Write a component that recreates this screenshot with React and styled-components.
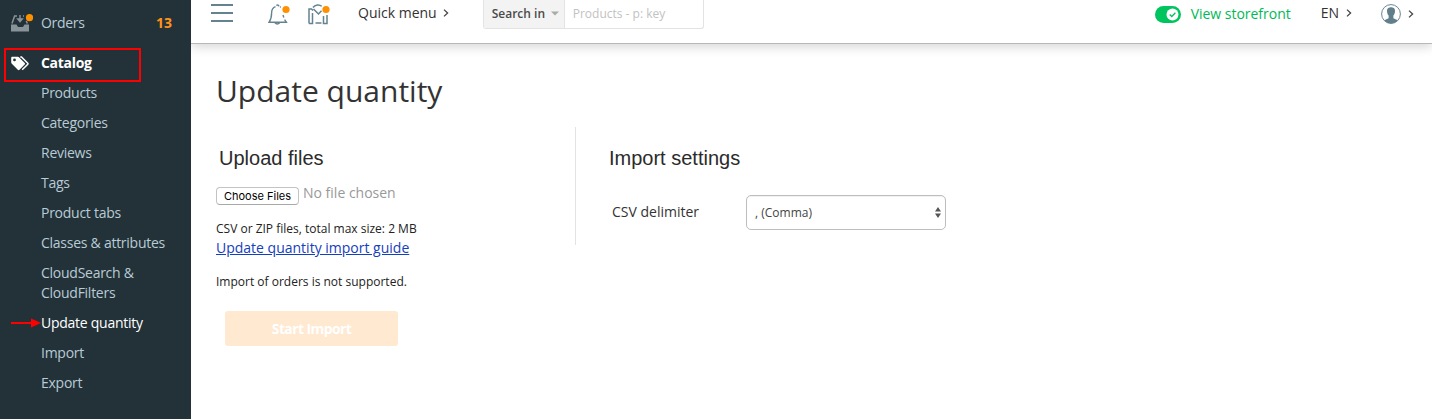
import React from "react";
import styled, { createGlobalStyle } from "styled-components";

const GlobalStyle = createGlobalStyle`
  *, *::before, *::after { box-sizing: border-box; }
  html, body { margin: 0; padding: 0; background: #fff; overflow: hidden; }
  body { font-family: "Open Sans", "Noto Sans", sans-serif; font-size: 14px; line-height: 20px; color: #333; }
  h1, h2, p, ul { margin: 0; padding: 0; }
  svg { display: block; }
`;

const Page = styled.div`
  display: flex;
  width: 1432px;
  height: 419px;
`;

const Sidebar = styled.nav`
  position: relative;
  flex: 0 0 191px;
  background: #233238;
  padding-top: 3px;
`;

const SectionRow = styled.a`
  display: flex;
  align-items: center;
  height: 40px;
  padding: 0 19px 0 11px;
  color: ${(p) => (p.$active ? "#fff" : "#b8cbd6")};
  font-weight: ${(p) => (p.$active ? 700 : 400)};
  letter-spacing: -0.3px;
`;

const SectionIcon = styled.span`
  width: 30px;
`;

const Count = styled.span`
  margin-left: auto;
  color: #ff9419;
  font-weight: 700;
  letter-spacing: 0;
`;

const SubMenu = styled.ul`
  list-style: none;
`;

const SubItem = styled.li`
  padding: 0 20px 10px 41px;
  color: ${(p) => (p.$active ? "#fff" : "#b8cbd6")};
  letter-spacing: -0.26px;
`;

const Highlight = styled.div`
  position: absolute;
  left: 4px;
  top: 48px;
  width: 137px;
  height: 34px;
  border: 2px solid #f00;
`;

const Pointer = styled.svg`
  position: absolute;
  left: 11px;
  top: 318px;
`;

const Main = styled.main`
  flex: 1;
  min-width: 0;
`;

const TopBar = styled.header`
  display: flex;
  align-items: flex-start;
  height: 44px;
  border-bottom: 1px solid #b4bab8;
  box-shadow: 0 3px 10px rgba(0, 0, 0, 0.16);
  clip-path: inset(0 0 -14px 0);
  padding-left: 20px;
`;

const BarIcon = styled.span`
  margin: ${(p) => p.$m};
`;

const BarLink = styled.a`
  display: flex;
  align-items: center;
  gap: ${(p) => p.$gap || "6px"};
  height: 20px;
  margin: ${(p) => p.$m};
  letter-spacing: ${(p) => p.$tracking || "0"};
  color: ${(p) => (p.$green ? "#00b956" : "#333")};
  white-space: nowrap;
`;

const SearchBox = styled.div`
  display: flex;
  width: 221px;
  height: 29px;
  margin-left: 34px;
  border: 1px solid #e3e3e3;
  border-top: 0;
  border-radius: 0 0 3px 3px;
  font-size: 12px;
`;

const SearchScope = styled.div`
  display: flex;
  align-items: center;
  gap: 6px;
  width: 81px;
  padding: 0 0 1px 8px;
  background: #f3f3f3;
  border-right: 1px solid #e3e3e3;
  font-weight: 600;
  color: #4a4a4a;
  white-space: nowrap;
`;

const SearchField = styled.div`
  padding: 4px 8px;
  color: #c2c2c2;
`;

const Right = styled.div`
  display: flex;
  margin-left: auto;
  padding-right: 19px;
`;

const Content = styled.div`
  padding: 27px 0 0 25px;
`;

const Title = styled.h1`
  font-size: 30px;
  line-height: 40px;
  font-weight: 400;
  color: #333;
`;

const Columns = styled.div`
  display: flex;
  margin-top: 16px;
`;

const UploadPanel = styled.section`
  width: 359px;
`;

const SettingsPanel = styled.section`
  height: 118px;
  padding-left: 33px;
  border-left: 1px solid #e3e3e3;
`;

const Heading = styled.h2`
  font: 400 20px/24px "Liberation Sans", Arial, sans-serif;
  color: #2b2b2b;
  padding: ${(p) => p.$pad};
`;

const FileRow = styled.div`
  display: flex;
  gap: 4px;
  margin: 13px 0 15px;
  color: #999;
`;

const FileButton = styled.button`
  width: 83px;
  height: 18px;
  margin-top: 4px;
  padding: 0;
  border: 1px solid #c4c4c4;
  border-bottom-color: #a9a9a9;
  border-radius: 4px;
  background: #fff;
  color: #000;
  font: 11px/15px Inter, sans-serif;
  white-space: nowrap;
`;

const Note = styled.p`
  font-size: 12px;
  line-height: 18px;
  color: #222;
`;

const GuideLink = styled.a`
  display: block;
  width: max-content;
  margin-bottom: 15px;
  color: #1540bd;
  text-decoration: underline;
`;

const StartButton = styled.button`
  display: block;
  width: 173px;
  height: 35px;
  margin: 20px 0 0 9px;
  padding: 0;
  border: 0;
  border-radius: 3px;
  background: #ffe9d0;
  color: #fff;
  font: 700 14px/35px "Open Sans", sans-serif;
  letter-spacing: -0.6px;
`;

const Field = styled.label`
  display: flex;
  align-items: center;
  margin: 25px 0 0 3px;
`;

const FieldName = styled.span`
  width: 134px;
  padding-bottom: 2px;
`;

const Select = styled.span`
  display: flex;
  align-items: center;
  justify-content: space-between;
  width: 200px;
  height: 35px;
  padding: 0 4px 0 8px;
  border: 1px solid #bdbdbd;
  border-radius: 5px;
  box-shadow: inset 0 1px 1px rgba(0, 0, 0, 0.06);
  font-size: 12px;
  color: #444;
`;

const OrdersIcon = () => (
  <svg width="23" height="18" viewBox="0 0 23 18">
    <path d="M0 10.500h5.500l1.500 2.500h5l1.500-2.500H18V17.500H0z" fill="#89939a" />
    <path d="M1 9.500 3.600 2H6M12 2h1M15.300 7l1 2.500" fill="none" stroke="#89939a" strokeWidth="1.500" />
    <path d="M9 1v5M6.700 5 9 7.600 11.300 5z" fill="#89939a" stroke="#89939a" strokeWidth="1.400" />
    <circle cx="18.500" cy="3.700" r="3.600" fill="#ff9000" />
  </svg>
);

const TagsIcon = () => (
  <svg width="19" height="15" viewBox="0 0 19 15">
    <path fillRule="evenodd" d="M1.300.8h5.500c.6 0 1 .2 1.400.6l5.500 5.500c.5.5.5 1.200 0 1.700l-5.200 5.200c-.5.5-1.200.5-1.700 0L1.100 8.100C.5 7.500.2 6.900.2 6.200V1.900C.2 1.300.7.800 1.300.8zM3.500 2.500a1.400 1.400 0 1 0 0 2.800 1.400 1.400 0 0 0 0-2.800z" fill="#fff" />
    <path d="M9.300 1h1.200l6.300 6.200c.3.300.3.700 0 1L11.200 13.800" fill="none" stroke="#fff" strokeWidth="1.500" />
  </svg>
);

const MenuIcon = () => (
  <svg width="22" height="18" viewBox="0 0 22 18">
    <path d="M0 1h22M0 9h22M0 17h22" stroke="#64838f" strokeWidth="2" />
  </svg>
);

const BellIcon = () => (
  <svg width="22" height="21" viewBox="0 0 22 21" fill="none" stroke="#64838f" strokeWidth="1.400">
    <path d="M8.400 1.400q1.100-1 2.200 0v1M7.500 2.700C4.600 3.700 3.600 6 3.600 9c0 4.500-.6 6.500-2.600 9.300h17.400l-1.800-2.600M15.800 13.500 15 11M12 2.800l1 .4" />
    <path d="M7 18.800q2.300 2.400 4.600 0" strokeWidth="1.600" />
    <circle cx="18" cy="5.500" r="3.600" fill="#ff9000" stroke="none" />
  </svg>
);

const MarketIcon = () => (
  <svg width="23" height="21" viewBox="0 0 23 21" fill="none" stroke="#64838f" strokeWidth="1.500">
    <path d="M1 19.500V5h2.500L5 6.500M1 19.500h3.500V9M15.500 12v7.500H19V11" />
    <path d="M5 3.500C7 .3 11.500.2 13.700 2.300M5.500 5l5 5 3-3.200M7.500 19h6" />
    <circle cx="18" cy="5.500" r="3.600" fill="#ff9000" stroke="none" />
  </svg>
);

const Chevron = () => (
  <svg width="6" height="8" viewBox="0 0 6 8">
    <path d="M1 .6 4.600 4 1 7.400" fill="none" stroke="#444" strokeWidth="1.300" />
  </svg>
);

const Caret = () => (
  <svg width="8" height="5" viewBox="0 0 8 5">
    <path d="M0 .5h8L4 4.500z" fill="#aaa" />
  </svg>
);

const ToggleIcon = () => (
  <svg width="26" height="17" viewBox="0 0 26 17">
    <rect width="26" height="17" rx="8.500" fill="#00c45e" />
    <circle cx="17.500" cy="8.500" r="6" fill="#fff" />
    <path d="m14.700 8.500 2.100 2 3.600-3.700" fill="none" stroke="#00c45e" strokeWidth="1.300" />
  </svg>
);

const UserIcon = () => (
  <svg width="20" height="20" viewBox="0 0 20 20">
    <circle cx="10" cy="10" r="9.400" fill="#fff" stroke="#6a8590" strokeWidth="1" />
    <path d="M6 6.500C6 4 8 3.200 10 3.200s4.200.8 4 3.800c0 2-.8 3.500-1.600 4.500v2.700l4.300 2q-2.700 3.200-6.700 3.200t-6.700-3.200l4.300-2v-2.700C6.600 10.500 6 9 6 6.500z" fill="#607f8b" />
  </svg>
);

const Spinner = () => (
  <svg width="6" height="11" viewBox="0 0 6 11">
    <path d="M0 4.500 3 0l3 4.500zM0 6.500h6L3 11z" fill="#555" />
  </svg>
);

const items = [
  { label: "Products" },
  { label: "Categories" },
  { label: "Reviews" },
  { label: "Tags" },
  { label: "Product tabs" },
  { label: "Classes & attributes" },
  { label: "CloudSearch & CloudFilters" },
  { label: "Update quantity", active: true },
  { label: "Import" },
  { label: "Export" },
];

export default function App() {
  return (
    <>
      <GlobalStyle />
      <Page>
        <Sidebar>
          <SectionRow>
            <SectionIcon><OrdersIcon /></SectionIcon>
            Orders
            <Count>13</Count>
          </SectionRow>
          <SectionRow $active>
            <SectionIcon><TagsIcon /></SectionIcon>
            Catalog
          </SectionRow>
          <SubMenu>
            {items.map((item) => (
              <SubItem key={item.label} $active={item.active}>{item.label}</SubItem>
            ))}
          </SubMenu>
          <Highlight />
          <Pointer width="30" height="10" viewBox="0 0 30 10">
            <path d="M0 5h21" stroke="#f00" strokeWidth="2" />
            <path d="M20 .5 30 5l-10 4.500z" fill="#f00" />
          </Pointer>
        </Sidebar>
        <Main>
          <TopBar>
            <BarIcon $m="4px 0 0 0"><MenuIcon /></BarIcon>
            <BarIcon $m="4px 0 0 35px"><BellIcon /></BarIcon>
            <BarIcon $m="4px 0 0 18px"><MarketIcon /></BarIcon>
            <BarLink $m="3px 0 0 27px">Quick menu <Chevron /></BarLink>
            <SearchBox>
              <SearchScope>Search in <Caret /></SearchScope>
              <SearchField>Products - p: key</SearchField>
            </SearchBox>
            <Right>
              <BarLink $green $gap="10px" $tracking="-0.02px" $m="4px 30px 0 0"><ToggleIcon /> View storefront</BarLink>
              <BarLink $gap="7px" $m="3px 29px 0 0">EN <Chevron /></BarLink>
              <BarLink $gap="7px" $m="4px -1px 0 0"><UserIcon /> <Chevron /></BarLink>
            </Right>
          </TopBar>
          <Content>
            <Title>Update quantity</Title>
            <Columns>
              <UploadPanel>
                <Heading $pad="19px 0 0 3px">Upload files</Heading>
                <FileRow><FileButton>Choose Files</FileButton>No file chosen</FileRow>
                <Note>CSV or ZIP files, total max size: 2 MB</Note>
                <GuideLink>Update quantity import guide</GuideLink>
                <Note>Import of orders is not supported.</Note>
                <StartButton>Start Import</StartButton>
              </UploadPanel>
              <SettingsPanel>
                <Heading $pad="19px 0 0 0">Import settings</Heading>
                <Field>
                  <FieldName>CSV delimiter</FieldName>
                  <Select>, (Comma) <Spinner /></Select>
                </Field>
              </SettingsPanel>
            </Columns>
          </Content>
        </Main>
      </Page>
    </>
  );
}
